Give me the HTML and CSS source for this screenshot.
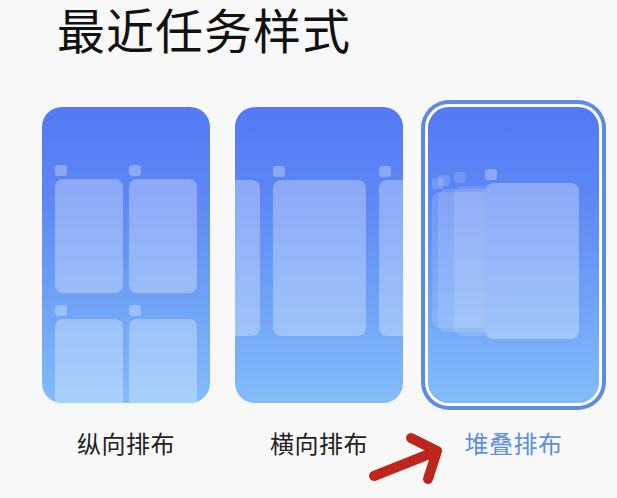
FILE: index.html
```html
<!DOCTYPE html>
<html lang="zh">
<head>
<meta charset="utf-8">
<link rel="stylesheet" href="styles.css">
</head>
<body>
<div class="page">
  <h1 class="title">最近任务样式</h1>
  <div class="options">
    <div class="option">
      <div class="card card-grid">
        <div class="group"><div class="dot"></div><div class="tile"></div></div>
        <div class="group"><div class="dot"></div><div class="tile"></div></div>
        <div class="group"><div class="dot"></div><div class="tile"></div></div>
        <div class="group"><div class="dot"></div><div class="tile"></div></div>
      </div>
      <div class="label">纵向排布</div>
    </div>
    <div class="option">
      <div class="card card-row">
        <div class="hgroup"><div class="dot"></div><div class="htile"></div></div>
        <div class="hgroup"><div class="dot"></div><div class="htile"></div></div>
        <div class="hgroup"><div class="dot"></div><div class="htile"></div></div>
      </div>
      <div class="label">横向排布</div>
    </div>
    <div class="option selected">
      <div class="card card-stack">
        <div class="stack s3"><div class="sdot"></div><div class="stile"></div></div>
        <div class="stack s2"><div class="sdot"></div><div class="stile"></div></div>
        <div class="stack s1"><div class="sdot"></div><div class="stile"></div></div>
        <div class="front"><div class="dot"></div><div class="ftile"></div></div>
      </div>
      <div class="label">堆叠排布</div>
    </div>
  </div>
  <svg class="arrow" width="617" height="498" viewBox="0 0 617 498">
    <path d="M374 476 L437 451 M411 438 L437 451 L428 479" fill="none" stroke="#c0251b" stroke-width="10" stroke-linecap="round" stroke-linejoin="round"/>
  </svg>
</div>
</body>
</html>
```
FILE: styles.css
```css
html, body {
  margin: 0;
  padding: 0;
  background: #f8f8f8;
}
.page {
  position: relative;
  width: 617px;
  height: 498px;
  overflow: hidden;
  font-family: "Noto Sans CJK SC", "Noto Sans", sans-serif;
}
.title {
  margin: 0;
  padding: 0 0 0 57px;
  font-size: 48px;
  line-height: 56px;
  font-weight: 400;
  color: #111;
  letter-spacing: 1px;
}
.options {
  display: flex;
  gap: 25px;
  padding-left: 42px;
  margin-top: 51px;
}
.option {
  display: flex;
  flex-direction: column;
  align-items: center;
}
.card {
  width: 168px;
  height: 296px;
  border-radius: 20px;
  background: linear-gradient(180deg, #5479f4 0%, #5d87f5 30%, #6fa2f6 65%, #82bdf9 100%);
  overflow: hidden;
  box-sizing: border-box;
}
.selected .card {
  width: 171px;
  border-radius: 21px;
  box-shadow: 0 0 0 3px #ffffff, 0 0 0 7px #5a8ce6;
  position: relative;
}
.label {
  margin-top: 23px;
  font-size: 24px;
  line-height: 34px;
  color: #222;
  letter-spacing: 0.5px;
}
.selected .label {
  color: #5b8fe2;
}
.dot {
  width: 12px;
  height: 11px;
  border-radius: 3px;
  background: rgba(255, 255, 255, 0.3);
}
/* card 1 */
.card-grid {
  display: grid;
  grid-template-columns: 68px 68px;
  column-gap: 6px;
  row-gap: 12px;
  padding: 58px 0 0 13px;
}
.group {
  display: flex;
  flex-direction: column;
  gap: 3px;
}
.tile {
  height: 114px;
  border-radius: 8px;
  background: rgba(255, 255, 255, 0.3);
}
/* card 2 */
.card-row {
  display: flex;
  justify-content: center;
  gap: 13px;
  padding-top: 59px;
}
.hgroup {
  flex: 0 0 93px;
  display: flex;
  flex-direction: column;
  gap: 3px;
}
.htile {
  height: 156px;
  border-radius: 8px;
  background: rgba(255, 255, 255, 0.3);
}
/* card 3 */
.stack, .front {
  position: absolute;
  display: flex;
  flex-direction: column;
  gap: 3px;
}
.front {
  left: 57px;
  top: 62px;
  width: 94px;
}
.ftile {
  height: 156px;
  border-radius: 8px;
  background: rgba(255, 255, 255, 0.3);
}
.sdot {
  width: 12px;
  height: 11px;
  border-radius: 3px;
  background: rgba(255, 255, 255, 0.15);
}
.stile {
  border-radius: 8px 0 0 8px;
  background: rgba(255, 255, 255, 0.13);
}
.s1 { left: 26px; top: 65px; width: 31px; }
.s1 .stile { height: 150px; }
.s2 { left: 10px; top: 68px; width: 47px; }
.s2 .stile { height: 143px; }
.s3 { left: 4px; top: 71px; width: 53px; }
.s3 .stile { height: 136px; }
.arrow {
  position: absolute;
  left: 0;
  top: 0;
  pointer-events: none;
}
```
